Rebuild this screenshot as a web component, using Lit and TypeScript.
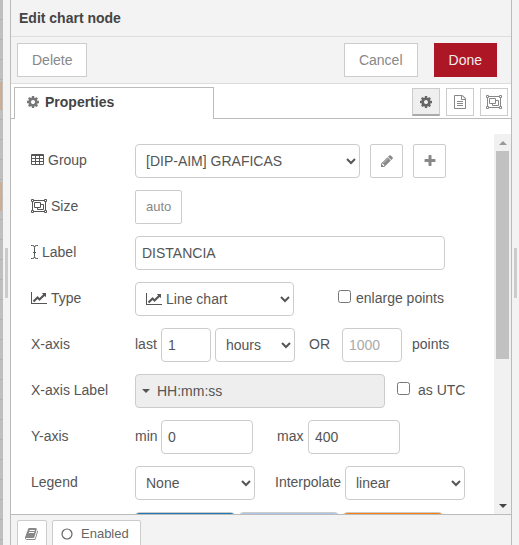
import { LitElement, html, svg, css, type TemplateResult } from "lit";
import { customElement, property } from "lit/decorators.js";

const GLYPHS: Record<string, { w: number; h: number; box: string; body: TemplateResult }> = {
  cog: {
    w: 14, h: 14, box: "0 0 1792 1792",
    body: svg`<path d="M1152 896q0-106-75-181t-181-75-181 75-75 181 75 181 181 75 181-75 75-181zm512-109v222q0 12-8 23t-20 13l-185 28q-19 54-39 91 35 50 107 138 10 12 10 25t-9 23q-27 37-99 108t-94 71q-12 0-26-9l-138-108q-44 23-91 38-16 136-29 186-7 28-36 28h-222q-14 0-24.500-8.500t-11.500-21.500l-28-184q-49-16-90-37l-141 107q-10 9-25 9-14 0-25-11-126-114-165-168-7-10-7-23 0-12 8-23 15-21 51-66.500t54-70.500q-27-50-41-99l-183-27q-13-2-21-12.500t-8-23.500v-222q0-12 8-23t19-13l186-28q14-46 39-92-40-57-107-138-10-12-10-24 0-10 9-23 26-36 98.500-107.500t94.500-71.500q13 0 26 10l138 107q44-23 91-38 16-136 29-186 7-28 36-28h222q14 0 24.500 8.500t11.500 21.500l28 184q49 16 90 37l142-107q9-9 24-9 13 0 25 10 129 119 165 170 7 8 7 22 0 12-8 23-15 21-51 66.500t-54 70.500q26 50 41 98l183 28q13 2 21 12.500t8 23.500z"/>`,
  },
  pencil: {
    w: 14, h: 14, box: "0 0 1792 1792",
    body: svg`<path d="M491 1536l91-91-235-235-91 91v107h128v128h107zm523-928q0-22-22-22-10 0-17 7l-542 542q-7 7-7 17 0 22 22 22 10 0 17-7l542-542q7-7 7-17zm-54-192l416 416-832 832h-416v-416zm683 96q0 53-37 90l-166 166-416-416 166-165q36-38 90-38 53 0 91 38l235 234q37 39 37 91z"/>`,
  },
  plus: {
    w: 14, h: 14, box: "0 0 1792 1792",
    body: svg`<path d="M1600 736v192q0 40-28 68t-68 28h-416v416q0 40-28 68t-68 28h-192q-40 0-68-28t-28-68v-416h-416q-40 0-68-28t-28-68v-192q0-40 28-68t68-28h416v-416q0-40 28-68t68-28h192q40 0 68 28t28 68v416h416q40 0 68 28t28 68z"/>`,
  },
  doc: {
    w: 14, h: 14, box: "0 0 1792 1792",
    body: svg`<path d="M1596 380q28 28 48 76t20 88v1152q0 40-28 68t-68 28h-1344q-40 0-68-28t-28-68v-1600q0-40 28-68t68-28h896q40 0 88 20t76 48zm-444-244v376h376q-10-29-22-41l-313-313q-12-12-41-22zm384 1528v-1024h-416q-40 0-68-28t-28-68v-416h-768v1536h1280zm-1024-864q0-14 9-23t23-9h704q14 0 23 9t9 23v64q0 14-9 23t-23 9h-704q-14 0-23-9t-9-23v-64zm736 224q14 0 23 9t9 23v64q0 14-9 23t-23 9h-704q-14 0-23-9t-9-23v-64q0-14 9-23t23-9h704zm0 256q14 0 23 9t9 23v64q0 14-9 23t-23 9h-704q-14 0-23-9t-9-23v-64q0-14 9-23t23-9h704z"/>`,
  },
  chart: {
    w: 16, h: 14, box: "0 0 2048 1792",
    body: svg`<path d="M2048 1536v128h-2048v-1536h128v1408h1920zm-128-1248v435q0 21-19.500 29.500t-35.500-7.500l-121-121-633 633q-10 10-23 10t-23-10l-233-233-416 416-192-192 585-585q10-10 23-10t23 10l233 233 464-464-121-121q-16-16-7.500-35.500t29.500-19.500h435q14 0 23 9t9 23z"/>`,
  },
  book: {
    w: 14, h: 14, box: "0 0 1792 1792",
    body: svg`<path d="M1639 478q40 57 18 129l-275 906q-19 64-76.500 107.500t-122.500 43.500h-923q-77 0-148.500-53.500t-99.500-131.500q-24-67-2-127 0-4 3-27t4-37q1-8-3-21.500t-3-19.500q2-11 8-21t16.500-23.500 16.500-23.500q23-38 45-91.500t30-91.500q3-10 .5-30t-.5-28q3-11 17-28t17-23q21-36 42-92t25-90q1-9-2.500-32t.5-28q4-13 22-30.500t22-22.500q19-26 42.500-84.500t27.500-96.500q1-8-3-25.500t-2-26.500q2-8 9-18t18-23 17-21q8-12 16.500-30.500t15-35 16-36 19.500-32 26.500-23.500 36-11.500 47.500 5.500l-1 3q38-9 51-9h761q74 0 114 56t18 130l-274 906q-36 119-71.500 153.500t-128.500 34.500h-869q-27 0-38 15-11 16-1 43 24 70 144 70h923q29 0 56-15.500t35-41.500l300-987q7-22 5-57 38 15 59 43zm-1064 2q-4 13 2 22.500t20 9.500h608q13 0 25.500-9.500t16.500-22.500l21-64q4-13-2-22.500t-20-9.500h-608q-13 0-25.500 9.500t-16.500 22.500zm-83 256q-4 13 2 22.500t20 9.500h608q13 0 25.500-9.500t16.500-22.500l21-64q4-13-2-22.500t-20-9.500h-608q-13 0-25.500 9.500t-16.500 22.500z"/>`,
  },
  table: {
    w: 13, h: 14, box: "0 0 13 14",
    body: svg`<path fill-rule="evenodd" d="M1 1h11a1 1 0 0 1 1 1v9a1 1 0 0 1-1 1H1a1 1 0 0 1-1-1V2a1 1 0 0 1 1-1zM1 3v2h3V3zm4 0v2h3V3zm4 0v2h3V3zM1 6v2h3V6zm4 0v2h3V6zm4 0v2h3V6zM1 9v2h3V9zm4 0v2h3V9zm4 0v2h3V9z"/>`,
  },
  group: {
    w: 16, h: 14, box: "0 0 16 14",
    body: svg`<g fill="none" stroke="currentColor"><path d="M3 1.500h10M3 12.500h10M1.500 3v8M14.500 3v8"/><path d="M.5 .5h2v2h-2zM13.500 .5h2v2h-2zM.5 11.500h2v2h-2zM13.500 11.500h2v2h-2z"/><path d="M3.500 3.500h6v5h-6zM9.500 5.500h3v5h-6v-2"/></g>`,
  },
  cursor: {
    w: 7, h: 14, box: "0 0 7 14",
    body: svg`<path fill="none" stroke="currentColor" d="M0 .5h1.500q2 0 2 2v9q0 2-2 2H0M7 .5H5.500q-2 0-2 2M7 13.500H5.500q-2 0-2-2M2 7.500h3"/>`,
  },
  ring: {
    w: 12, h: 12, box: "0 0 12 12",
    body: svg`<circle cx="6" cy="6" r="5" fill="none" stroke="currentColor" stroke-width="1.200"/>`,
  },
  caret: { w: 8, h: 4, box: "0 0 8 4", body: svg`<path d="M0 0h8L4 4z"/>` },
  up: { w: 8, h: 4, box: "0 0 8 4", body: svg`<path d="M0 4h8L4 0z"/>` },
};

@customElement("fa-glyph")
export class FaGlyph extends LitElement {
  @property() name = "cog";
  static styles = css`
    :host { display: inline-flex; flex: none; }
    svg { display: block; fill: currentColor; }
  `;
  render() {
    const g = GLYPHS[this.name];
    return html`<svg width=${g.w} height=${g.h} viewBox=${g.box} aria-hidden="true">${g.body}</svg>`;
  }
}

const PALETTE = ["#1f77b4", "#aec7e8", "#ff7f0e"];

@customElement("app-root")
export class AppRoot extends LitElement {
  static styles = css`
    :host {
      display: flex;
      height: 100vh;
      overflow: hidden;
      background: #f3f3f3;
      color: #555;
      font: 14px/20px "Liberation Sans", Arial, sans-serif;
    }
    * { box-sizing: border-box; }
    button, input, select { font: inherit; color: inherit; margin: 0; }

    .canvas {
      flex: none;
      width: 3px;
      background:
        linear-gradient(#cdae90, #cdae90) 0 82px / 2px 28px no-repeat,
        linear-gradient(#cdae90, #cdae90) 0 182px / 2px 29px no-repeat,
        repeating-linear-gradient(#bfbfbf 0 19px, #b3b3b3 19px 20px);
    }
    .splitter {
      flex: none;
      display: flex;
      align-items: center;
      justify-content: center;
      width: 7px;
    }
    .grip { width: 3px; height: 50px; background: #ccc; }

    .tray {
      flex: 1;
      min-width: 0;
      display: flex;
      flex-direction: column;
      border: solid #bbb;
      border-width: 0 1px;
    }
    .title {
      flex: none;
      height: 37px;
      margin: 0;
      padding: 8px;
      border-bottom: 1px solid #ddd;
      color: #444;
      font-size: 14px;
      line-height: 20px;
    }
    .toolbar {
      flex: none;
      display: flex;
      align-items: center;
      gap: 16px;
      height: 47px;
      padding: 0 14px 0 6px;
      border-bottom: 1px solid #ddd;
    }
    .push { margin-left: auto; }
    .btn {
      display: inline-flex;
      align-items: center;
      justify-content: center;
      height: 34px;
      padding: 0 14px;
      border: 1px solid #ccc;
      background: #fff;
      color: #888;
    }
    .primary { border-color: #ad1625; background: #ad1625; color: #eee; }

    .tabs {
      flex: none;
      display: flex;
      align-items: flex-end;
      gap: 6px;
      height: 35px;
      padding: 0 3px;
      border-bottom: 1px solid #bbb;
      background: #fff;
    }
    .tab {
      display: flex;
      align-items: center;
      gap: 5px;
      width: 200px;
      height: 32px;
      margin-bottom: -1px;
      padding: 0 11px 3px;
      border: 1px solid #bbb;
      border-bottom: 0;
      background: #fff;
      color: #444;
      font-weight: bold;
    }
    .tab fa-glyph { color: #777; }
    .tool {
      width: 28px;
      height: 28px;
      margin-bottom: 2px;
      padding: 0;
    }
    .tool.on { border-bottom: 2px solid #aaa; background: #efefef; color: #666; }

    .body {
      flex: 1;
      min-height: 0;
      display: flex;
      padding-top: 15px;
      background: #fff;
    }
    .form {
      flex: 1;
      min-width: 0;
      display: flex;
      flex-direction: column;
      gap: 12px;
      overflow: hidden;
      padding: 10px 0 0 20px;
    }
    .row { flex: none; display: flex; align-items: center; height: 34px; }
    .row label { padding-bottom: 2px; }
    .name { flex: none; display: flex; align-items: center; gap: 4px; width: 104px; }
    .field {
      height: 34px;
      padding: 0 6px;
      border: 1px solid #ccc;
      border-radius: 4px;
      background: #fff;
    }
    .field::placeholder { color: #aaa; opacity: 1; }
    .small { padding: 0 10px; border-radius: 2px; font-size: 13px; }
    .square { width: 33px; padding: 0; border-radius: 2px; }
    .ml4 { margin-left: 4px; }
    .ml10 { margin-left: 10px; }
    .ml12 { margin-left: 12px; }
    .ml14 { margin-left: 14px; }
    .ml20 { margin-left: 20px; }
    .ml24 { margin-left: 24px; }
    .ml44 { margin-left: 44px; }
    .w50 { width: 50px; }
    .w60 { width: 60px; }
    .w80 { width: 80px; }
    .w92 { width: 92px; }
    .w120 { width: 120px; }
    .w225 { width: 225px; }
    .w310 { width: 310px; }
    .lead { width: 26px; }
    .upto { width: 31px; }
    .interp { width: 70px; }
    .check { display: flex; align-items: center; gap: 5px; }
    .check.wide { gap: 8px; }
    .check input { width: 13px; height: 13px; margin-bottom: 4px; }
    .pick { position: relative; display: flex; }
    .pick fa-glyph { position: absolute; left: 11px; top: 10px; pointer-events: none; }
    .pick select { width: 159px; padding-left: 26px; }
    .format {
      display: flex;
      align-items: center;
      gap: 7px;
      width: 250px;
      background: #eee;
      text-align: left;
    }
    .swatch {
      width: 100px;
      height: 34px;
      margin-right: 4px;
      padding: 0;
      border: 1px solid #ccc;
      border-radius: 4px;
      background: #fff;
      overflow: hidden;
    }
    .swatch::-webkit-color-swatch-wrapper { padding: 0; }
    .swatch::-webkit-color-swatch { border: 0; }

    .scroll {
      flex: none;
      display: flex;
      flex-direction: column;
      align-items: center;
      width: 17px;
      background: #f1f1f1;
      color: #999;
    }
    .arrow { display: flex; align-items: center; justify-content: center; height: 17px; }
    .arrow.down { color: #444; }
    .track { flex: 1; width: 13px; }
    .thumb { height: 60%; background: #c1c1c1; }

    .footer {
      flex: none;
      display: flex;
      gap: 5px;
      height: 31px;
      padding: 5px 6px 0;
      border-top: 1px solid #bbb;
      overflow: hidden;
    }
    .footer .btn { flex: none; height: 28px; padding: 0 7px; border-radius: 2px; font-size: 13px; }
    .footer .state { gap: 8px; padding: 0 11px 0 8px; color: #666; }
  `;

  render() {
    return html`
      <div class="canvas"></div>
      <div class="splitter"><div class="grip"></div></div>
      <main class="tray">
        <h1 class="title">Edit chart node</h1>
        <div class="toolbar">
          <button class="btn">Delete</button>
          <button class="btn push">Cancel</button>
          <button class="btn primary">Done</button>
        </div>
        <div class="tabs">
          <button class="tab"><fa-glyph name="cog"></fa-glyph>Properties</button>
          <button class="btn tool on push" aria-label="Properties"><fa-glyph name="cog"></fa-glyph></button>
          <button class="btn tool" aria-label="Description"><fa-glyph name="doc"></fa-glyph></button>
          <button class="btn tool" aria-label="Appearance"><fa-glyph name="group"></fa-glyph></button>
        </div>
        <div class="body">
          <form class="form">
            <div class="row">
              <label class="name" for="group"><fa-glyph name="table"></fa-glyph>Group</label>
              <select class="field w225" id="group"><option>[DIP-AIM] GRAFICAS</option></select>
              <button type="button" class="btn square ml10" aria-label="Edit group"><fa-glyph name="pencil"></fa-glyph></button>
              <button type="button" class="btn square ml10" aria-label="Add group"><fa-glyph name="plus"></fa-glyph></button>
            </div>
            <div class="row">
              <label class="name" for="size"><fa-glyph name="group"></fa-glyph>Size</label>
              <button type="button" class="btn small" id="size">auto</button>
            </div>
            <div class="row">
              <label class="name" for="label"><fa-glyph name="cursor"></fa-glyph>Label</label>
              <input class="field w310" id="label" type="text" .value=${"DISTANCIA"} />
            </div>
            <div class="row">
              <label class="name" for="type"><fa-glyph name="chart"></fa-glyph>Type</label>
              <span class="pick">
                <select class="field" id="type"><option>Line chart</option></select>
                <fa-glyph name="chart"></fa-glyph>
              </span>
              <label class="check ml44"><input type="checkbox" />enlarge points</label>
            </div>
            <div class="row">
              <label class="name" for="last">X-axis</label>
              <label class="lead" for="last">last</label>
              <input class="field w50" id="last" type="text" .value=${"1"} />
              <select class="field w80 ml4" aria-label="Unit"><option>hours</option></select>
              <label class="ml14" for="points">OR</label>
              <input class="field w60 ml12" id="points" type="text" placeholder="1000" />
              <label class="ml10" for="points">points</label>
            </div>
            <div class="row">
              <label class="name" for="format">X-axis Label</label>
              <button type="button" class="field format" id="format"><fa-glyph name="caret"></fa-glyph>HH:mm:ss</button>
              <label class="check wide ml12"><input type="checkbox" />as UTC</label>
            </div>
            <div class="row">
              <label class="name" for="min">Y-axis</label>
              <label class="lead" for="min">min</label>
              <input class="field w92" id="min" type="text" .value=${"0"} />
              <label class="upto ml24" for="max">max</label>
              <input class="field w92" id="max" type="text" .value=${"400"} />
            </div>
            <div class="row">
              <label class="name" for="legend">Legend</label>
              <select class="field w120" id="legend"><option>None</option></select>
              <label class="interp ml20" for="interp">Interpolate</label>
              <select class="field w120" id="interp"><option>linear</option></select>
            </div>
            <div class="row">
              <span class="name"></span>
              ${PALETTE.map((c) => html`<input class="swatch" type="color" aria-label="Series colour" .value=${c} />`)}
            </div>
          </form>
          <div class="scroll">
            <div class="arrow"><fa-glyph name="up"></fa-glyph></div>
            <div class="track"><div class="thumb"></div></div>
            <div class="arrow down"><fa-glyph name="caret"></fa-glyph></div>
          </div>
        </div>
        <div class="footer">
          <button class="btn" aria-label="Help"><fa-glyph name="book"></fa-glyph></button>
          <button class="btn state"><fa-glyph name="ring"></fa-glyph>Enabled</button>
        </div>
      </main>
      <div class="splitter"><div class="grip"></div></div>
    `;
  }
}
